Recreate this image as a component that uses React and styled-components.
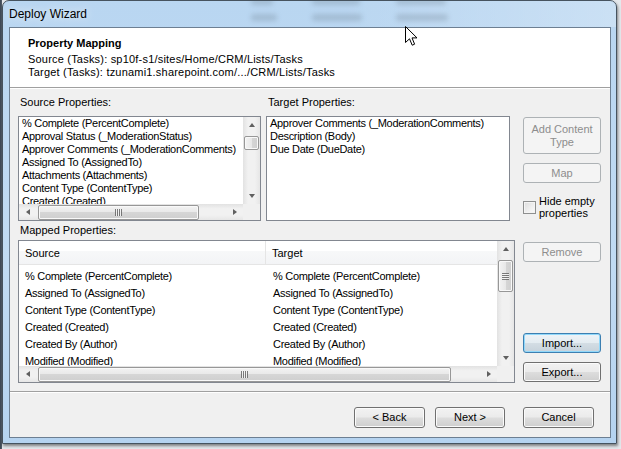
import React from 'react';
import styled, { createGlobalStyle, css } from 'styled-components';

const GlobalStyle = createGlobalStyle`
  html, body {
    margin: 0;
    padding: 0;
  }
  body {
    width: 621px;
    height: 449px;
    overflow: hidden;
    background: #e4e8ec;
    font-family: "Liberation Sans", Arial, sans-serif;
    font-size: 11px;
    color: #000;
  }
  * {
    box-sizing: border-box;
  }
`;

const sourceProps = [
  '% Complete (PercentComplete)',
  'Approval Status (_ModerationStatus)',
  'Approver Comments (_ModerationComments)',
  'Assigned To (AssignedTo)',
  'Attachments (Attachments)',
  'Content Type (ContentType)',
  'Created (Created)',
];

const targetProps = ['Approver Comments (_ModerationComments)', 'Description (Body)', 'Due Date (DueDate)'];

const mapped = [
  ['% Complete (PercentComplete)', '% Complete (PercentComplete)'],
  ['Assigned To (AssignedTo)', 'Assigned To (AssignedTo)'],
  ['Content Type (ContentType)', 'Content Type (ContentType)'],
  ['Created (Created)', 'Created (Created)'],
  ['Created By (Author)', 'Created By (Author)'],
  ['Modified (Modified)', 'Modified (Modified)'],
];

// 유리창 뒤로 비치는 흐린 덩어리 (top row, bottom row widths)
const backdrop = [
  { id: 'a', w: 27, top: 22, bottom: 26 },
  { id: 'b', w: 50, top: 48, bottom: 50 },
  { id: 'c', w: 53, top: 50, bottom: 52 },
];

// scrollbar parts
function Arrow({ dir }) {
  return (
    <ArrowBtn>
      <Tri dir={dir} />
    </ArrowBtn>
  );
}

function VScroll({ offset, size, grip }) {
  return (
    <VBar>
      <Arrow dir="up" />
      <VTrack>
        <VThumb offset={offset} size={size}>
          {grip && <VGrip />}
        </VThumb>
      </VTrack>
      <Arrow dir="down" />
    </VBar>
  );
}

function HScroll({ offset, size }) {
  return (
    <HBar>
      <Arrow dir="left" />
      <HTrack>
        <HThumb offset={offset} size={size}>
          <HGrip />
        </HThumb>
      </HTrack>
      <Arrow dir="right" />
    </HBar>
  );
}

function Cursor() {
  return (
    <CursorSvg width="13" height="21" viewBox="0 0 13 21">
      <path d="M0.5 0.5 L0.5 16.5 L4.5 12.8 L7.2 19.2 L9.6 18.2 L7 11.9 L12 11.9 Z" fill="#fff" stroke="#000" strokeWidth="1" />
    </CursorSvg>
  );
}

export default function App() {
  return (
    <>
      <GlobalStyle />
      <Screen>
        <Window>
          <TitleBar>
            <Backdrop>
              {backdrop.map((b) => (
                <BlurCol key={b.id} w={b.w}>
                  <Blob w={b.top} />
                  <Blob w={b.bottom} />
                </BlurCol>
              ))}
            </Backdrop>
            <TitleText>Deploy Wizard</TitleText>
          </TitleBar>
          <Client>
            <Header>
              <HeaderTitle>Property Mapping</HeaderTitle>
              <HeaderLine>Source (Tasks): sp10f-s1/sites/Home/CRM/Lists/Tasks</HeaderLine>
              <HeaderLine>Target (Tasks): tzunami1.sharepoint.com/.../CRM/Lists/Tasks</HeaderLine>
            </Header>
            <Body>
              <LeftArea>
                <TopRow>
                  <Column>
                    <FieldLabel>Source Properties:</FieldLabel>
                    <ListBox scroll>
                      <Items>
                        {sourceProps.map((p) => (
                          <Item key={p}>{p}</Item>
                        ))}
                      </Items>
                      <VScroll offset={3} size={14} />
                      <HScroll offset={2} size={161} />
                      <Corner />
                    </ListBox>
                  </Column>
                  <Column>
                    <FieldLabel>Target Properties:</FieldLabel>
                    <ListBox>
                      <Items>
                        {targetProps.map((p) => (
                          <Item key={p}>{p}</Item>
                        ))}
                      </Items>
                    </ListBox>
                  </Column>
                </TopRow>
                <FieldLabel mapped>Mapped Properties:</FieldLabel>
                <ListView>
                  <ViewContent>
                    <HeaderRow>
                      <HeadCell first>Source</HeadCell>
                      <HeadCell>Target</HeadCell>
                    </HeaderRow>
                    <Rows>
                      {mapped.map(([s, t]) => (
                        <Row key={s}>
                          <Cell first>{s}</Cell>
                          <Cell>{t}</Cell>
                        </Row>
                      ))}
                    </Rows>
                  </ViewContent>
                  <VScroll offset={3} size={32} grip />
                  <HScroll offset={2} size={413} />
                  <Corner />
                </ListView>
              </LeftArea>
              <ButtonColumn>
                <Button disabled tall gap={21}>
                  Add Content
                  <br />
                  Type
                </Button>
                <Button disabled gap={9}>
                  Map
                </Button>
                <CheckRow>
                  <CheckBox />
                  <CheckLabel>
                    Hide empty
                    <br />
                    properties
                  </CheckLabel>
                </CheckRow>
                <Button disabled gap={23}>
                  Remove
                </Button>
                <Button focused gap={71}>
                  Import...
                </Button>
                <Button gap={9}>Export...</Button>
              </ButtonColumn>
            </Body>
            <Footer>
              <Button w={71} footer>
                &lt; Back
              </Button>
              <Button w={70} footer>
                Next &gt;
              </Button>
              <Button w={71} footer space={8}>
                Cancel
              </Button>
            </Footer>
          </Client>
        </Window>
        <Cursor />
      </Screen>
    </>
  );
}

// 화면 / 창 틀

const Screen = styled.div`
  position: relative;
  width: 621px;
  height: 449px;
  padding-left: 2px;
  background: linear-gradient(90deg, #3a4552 0, #56606c 2px, #e4e8ec 2px);
`;

const Window = styled.div`
  width: 615px;
  height: 444px;
  display: flex;
  flex-direction: column;
  padding: 0 5px 5px 6px;
  border: 1px solid #46535f;
  border-radius: 7px 7px 0 0;
  background: linear-gradient(180deg, #b9d6f1 0%, #c1dbf3 60%, #b5d3f0 100%);
  box-shadow: 1px 2px 3px rgba(0, 0, 0, 0.45);
  overflow: hidden;
`;

const TitleBar = styled.div`
  position: relative;
  height: 26px;
  display: flex;
  align-items: center;
  background: linear-gradient(90deg, rgba(255, 255, 255, 0) 0%, rgba(255, 255, 255, 0) 55%, rgba(255, 255, 255, 0.25) 100%);
  margin: 0 -5px 0 -6px;
  padding-left: 6px;
`;

const TitleText = styled.span`
  position: relative;
  font-family: "Liberation Sans", Arial, sans-serif;
  font-size: 12px;
  color: #000;
  padding-bottom: 1px;
  text-shadow: 0 0 8px rgba(255, 255, 255, 0.9);
`;

const Backdrop = styled.div`
  position: absolute;
  top: -3px;
  left: 248px;
  display: flex;
  gap: 34px;
  filter: blur(2.6px);
`;

const BlurCol = styled.div`
  display: flex;
  flex-direction: column;
  gap: 9px;
  width: ${(p) => p.w}px;
`;

const Blob = styled.span`
  display: block;
  width: ${(p) => p.w}px;
  height: 7px;
  border-radius: 3px;
  background: rgba(80, 95, 110, 0.22);
`;

const Client = styled.div`
  flex: 1;
  display: flex;
  flex-direction: column;
  border: 1px solid #6d7f92;
  background: #f0f0f0;
`;

// 상단 헤더

const Header = styled.div`
  height: 60px;
  padding: 9px 18px 0;
  background: #fff;
  border-bottom: 1px solid #a0a0a0;
`;

const HeaderTitle = styled.div`
  font-weight: bold;
  font-size: 11px;
  line-height: 13px;
  margin-bottom: 3px;
`;

const HeaderLine = styled.div`
  font-size: 11px;
  line-height: 13px;
  letter-spacing: 0.2px;
`;

// 본문

const Body = styled.div`
  flex: 1;
  display: flex;
  padding: 8px 0 0 8px;
  box-shadow: inset 0 1px 0 #fff;
`;

const LeftArea = styled.div`
  width: 497px;
  display: flex;
  flex-direction: column;
`;

const TopRow = styled.div`
  display: grid;
  grid-template-columns: 243px 244px;
  column-gap: 5px;
`;

const Column = styled.div`
  display: flex;
  flex-direction: column;
`;

const FieldLabel = styled.div`
  height: 13px;
  line-height: 13px;
  padding-left: 2px;
  margin: ${(p) => (p.mapped ? '3px 0 3px' : '0 0 7px')};
  white-space: nowrap;
`;

const ListBox = styled.div`
  height: 105px;
  border: 1px solid #828790;
  background: #fff;
  display: grid;
  grid-template-columns: ${(p) => (p.scroll ? '1fr 17px' : '1fr')};
  grid-template-rows: ${(p) => (p.scroll ? '1fr 16px' : '1fr')};
  overflow: hidden;
`;

const Items = styled.div`
  padding: 0 0 0 3px;
  overflow: hidden;
  min-width: 0;
  min-height: 0;
`;

const Item = styled.div`
  height: 13px;
  line-height: 13px;
  letter-spacing: -0.3px;
  white-space: nowrap;
`;

const ListView = styled.div`
  height: 143px;
  border: 1px solid #828790;
  background: #fff;
  display: grid;
  grid-template-columns: 1fr 17px;
  grid-template-rows: 1fr 16px;
  overflow: hidden;
`;

const ViewContent = styled.div`
  min-width: 0;
  min-height: 0;
  overflow: hidden;
`;

const HeaderRow = styled.div`
  display: flex;
  height: 24px;
  background: linear-gradient(180deg, #ffffff 0%, #ffffff 45%, #f7f8f9 45%, #f3f4f6 100%);
  border-bottom: 1px solid #e5e5e5;
`;

const HeadCell = styled.div`
  width: ${(p) => (p.first ? '247px' : 'auto')};
  flex: ${(p) => (p.first ? 'none' : '1')};
  display: flex;
  align-items: center;
  padding-left: 6px;
  border-right: ${(p) => (p.first ? '1px solid #e5e5e5' : 'none')};
  white-space: nowrap;
`;

const Rows = styled.div`
  padding-top: 2px;
`;

const Row = styled.div`
  display: flex;
  height: 17px;
  align-items: center;
`;

const Cell = styled.div`
  width: ${(p) => (p.first ? '248px' : 'auto')};
  flex: ${(p) => (p.first ? 'none' : '1')};
  padding-left: 6px;
  letter-spacing: -0.3px;
  white-space: nowrap;
  overflow: hidden;
`;

// 스크롤바

const VBar = styled.div`
  display: flex;
  flex-direction: column;
  background: linear-gradient(90deg, #e2e2e2 0%, #f1f1f1 30%, #f1f1f1 70%, #e6e6e6 100%);
`;

const HBar = styled.div`
  display: flex;
  background: linear-gradient(180deg, #e2e2e2 0%, #f1f1f1 30%, #f1f1f1 70%, #e6e6e6 100%);
`;

const ArrowBtn = styled.div`
  flex: none;
  width: 17px;
  height: 16px;
  display: flex;
  align-items: center;
  justify-content: center;
`;

const Tri = styled.span`
  width: 0;
  height: 0;
  ${(p) =>
    p.dir === 'up' &&
    css`
      border-left: 3.5px solid transparent;
      border-right: 3.5px solid transparent;
      border-bottom: 4px solid #606060;
    `}
  ${(p) =>
    p.dir === 'down' &&
    css`
      border-left: 3.5px solid transparent;
      border-right: 3.5px solid transparent;
      border-top: 4px solid #606060;
    `}
  ${(p) =>
    p.dir === 'left' &&
    css`
      border-top: 3.5px solid transparent;
      border-bottom: 3.5px solid transparent;
      border-right: 4px solid #606060;
    `}
  ${(p) =>
    p.dir === 'right' &&
    css`
      border-top: 3.5px solid transparent;
      border-bottom: 3.5px solid transparent;
      border-left: 4px solid #606060;
    `}
`;

const VTrack = styled.div`
  flex: 1;
  display: flex;
  flex-direction: column;
  align-items: center;
`;

const HTrack = styled.div`
  flex: 1;
  display: flex;
  align-items: center;
`;

const thumbBase = css`
  border: 1px solid #979797;
  border-radius: 2px;
  box-shadow: inset 0 0 0 1px #f9f9f9;
  display: flex;
  align-items: center;
  justify-content: center;
`;

const VThumb = styled.div`
  ${thumbBase};
  margin-top: ${(p) => p.offset}px;
  width: 15px;
  height: ${(p) => p.size}px;
  background: linear-gradient(90deg, #f3f3f3 0%, #e8e8e8 50%, #d6d6d6 50%, #cfcfcf 100%);
`;

const HThumb = styled.div`
  ${thumbBase};
  margin-left: ${(p) => p.offset}px;
  height: 15px;
  width: ${(p) => p.size}px;
  background: linear-gradient(180deg, #f3f3f3 0%, #e8e8e8 50%, #d6d6d6 50%, #cfcfcf 100%);
`;

const VGrip = styled.span`
  width: 7px;
  height: 7px;
  background: repeating-linear-gradient(180deg, #5e5e5e 0 1px, #f5f5f5 1px 2px);
  opacity: 0.8;
`;

const HGrip = styled.span`
  width: 7px;
  height: 7px;
  background: repeating-linear-gradient(90deg, #5e5e5e 0 1px, #f5f5f5 1px 2px);
  opacity: 0.8;
`;

const Corner = styled.div`
  background: #f0f0f0;
`;

// 버튼

const Button = styled.button`
  flex: none;
  width: ${(p) => (p.w ? `${p.w}px` : '78px')};
  height: ${(p) => (p.tall ? '37px' : p.footer ? '21px' : '20px')};
  margin-top: ${(p) => (p.gap ? `${p.gap}px` : '0')};
  margin-left: ${(p) => (p.space ? `${p.space}px` : '0')};
  padding: 0;
  font-family: "Liberation Sans", Arial, sans-serif;
  font-size: 11px;
  line-height: 13px;
  color: #000;
  border: 1px solid #707070;
  border-radius: 3px;
  background: linear-gradient(180deg, #f2f2f2 0%, #ebebeb 48%, #dddddd 52%, #cfcfcf 100%);
  box-shadow: inset 0 0 0 1px #fbfbfb;
  ${(p) =>
    p.disabled &&
    css`
      color: #8d8d8d;
      border-color: #adb2b5;
      background: #f4f4f4;
      box-shadow: none;
    `}
  ${(p) =>
    p.focused &&
    css`
      border-color: #3c7fb1;
      background: linear-gradient(180deg, #eef3f7 0%, #e4ecf1 48%, #d3dde4 52%, #c6d2db 100%);
      box-shadow: inset 0 0 0 1px #91d8fa;
    `}
`;

const ButtonColumn = styled.div`
  width: 78px;
  margin-left: 8px;
  display: flex;
  flex-direction: column;
`;

const CheckRow = styled.div`
  display: flex;
  align-items: center;
  margin-top: 12px;
`;

const CheckBox = styled.span`
  flex: none;
  width: 13px;
  height: 13px;
  border: 1px solid #8e8f8f;
  background: linear-gradient(135deg, #dcdcdc 0%, #f0f0f0 60%, #fbfbfb 100%);
  box-shadow: inset 0 0 0 1px #f4f4f4;
`;

const CheckLabel = styled.span`
  margin-left: 3px;
  line-height: 12px;
  white-space: nowrap;
`;

// 하단

const Footer = styled.div`
  height: 46px;
  display: flex;
  justify-content: flex-end;
  align-items: flex-start;
  gap: 10px;
  padding: 15px 16px 0 0;
  border-top: 1px solid #a0a0a0;
  box-shadow: inset 0 1px 0 #fff;
`;

const CursorSvg = styled.svg`
  position: absolute;
  left: 405px;
  top: 26px;
`;
